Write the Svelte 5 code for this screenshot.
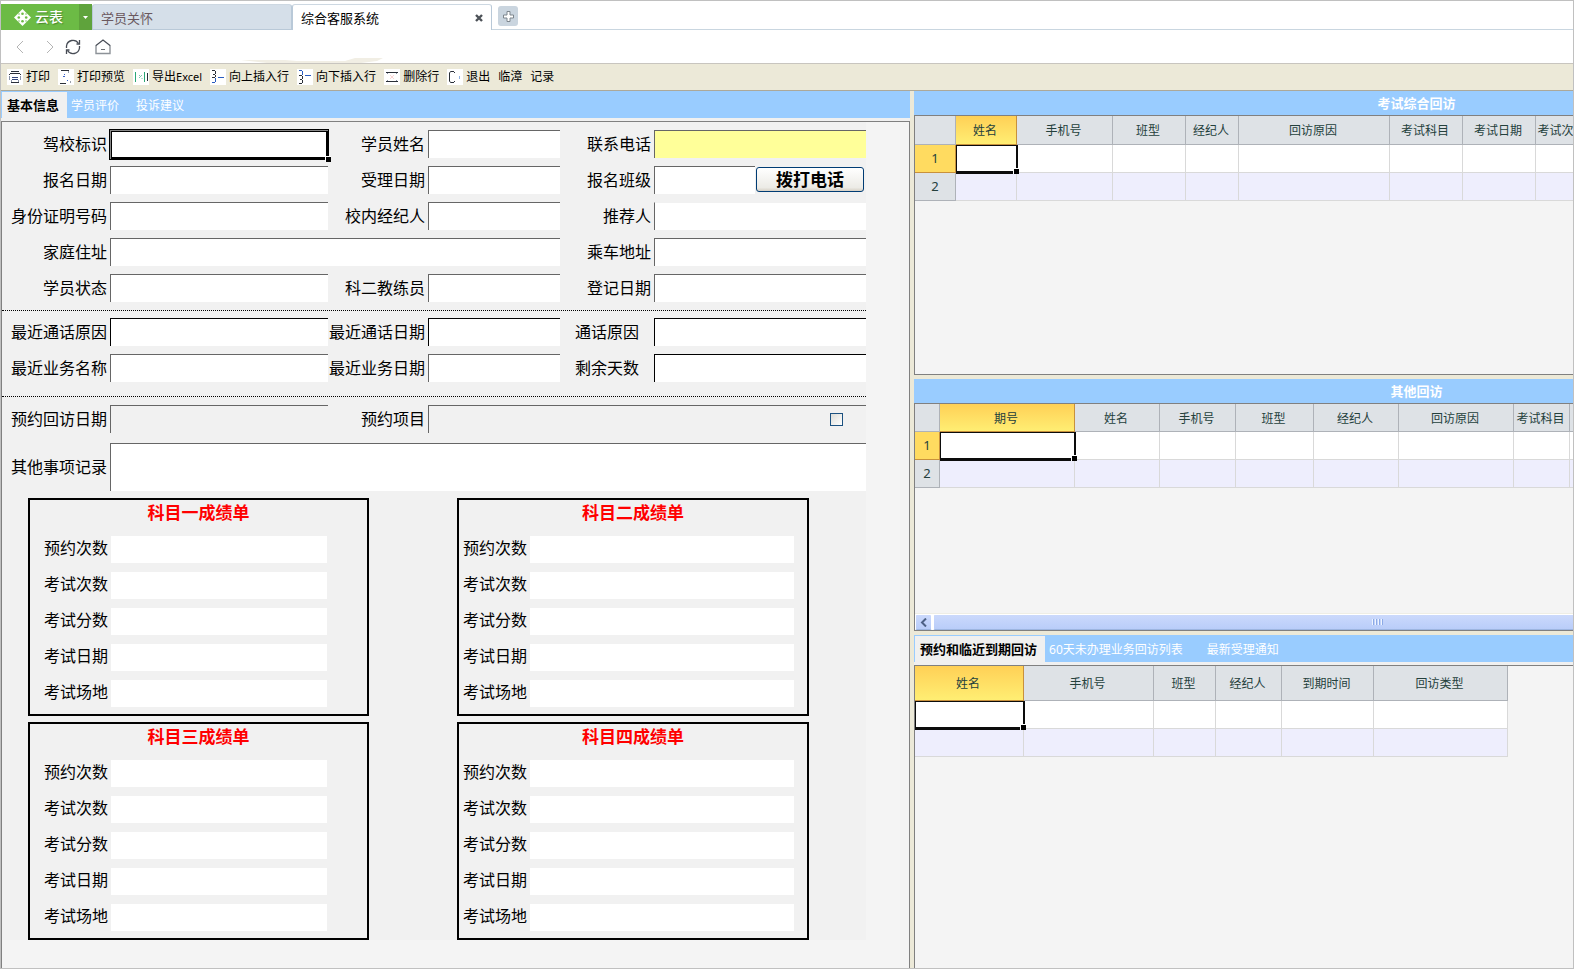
<script>
  let activeTab = "基本信息";
  let activeList = "预约和临近到期回访";

  const infoTabs = ["基本信息", "学员评价", "投诉建议"];
  const listTabs = ["预约和临近到期回访", "60天未办理业务回访列表", "最新受理通知"];

  const tools = [
    { text: "打印", icon: "print" },
    { text: "打印预览", icon: "preview" },
    { text: "导出", latin: "Excel", icon: "excel" },
    { text: "向上插入行", icon: "above" },
    { text: "向下插入行", icon: "below" },
    { text: "删除行", icon: "remove" },
    { text: "退出", icon: "exit" },
    { text: "临漳" },
    { text: "记录" },
  ];

  const student = [
    { label: "驾校标识", selected: true },
    { label: "学员姓名" },
    { label: "联系电话", kind: "phone" },
    { label: "报名日期" },
    { label: "受理日期" },
    { label: "报名班级", call: true },
    { label: "身份证明号码" },
    { label: "校内经纪人" },
    { label: "推荐人", kind: "no-top" },
    { label: "家庭住址", wide: true },
    { label: "乘车地址" },
    { label: "学员状态" },
    { label: "科二教练员" },
    { label: "登记日期" },
  ];

  const recent = [
    { label: "最近通话原因", kind: "dark" },
    { label: "最近通话日期", kind: "dark" },
    { label: "通话原因", kind: "dark", center: true },
    { label: "最近业务名称" },
    { label: "最近业务日期" },
    { label: "剩余天数", kind: "dark", center: true },
  ];

  const scoreCards = ["科目一成绩单", "科目二成绩单", "科目三成绩单", "科目四成绩单"];
  const scoreFields = ["预约次数", "考试次数", "考试分数", "考试日期", "考试场地"];

  const examGrid = {
    numberWidth: 41,
    size: "medium",
    columns: [
      ["姓名", 61],
      ["手机号", 96],
      ["班型", 73],
      ["经纪人", 53],
      ["回访原因", 151],
      ["考试科目", 73],
      ["考试日期", 73],
      ["考试次数", 54],
    ],
  };

  const otherGrid = {
    numberWidth: 25,
    size: "small",
    columns: [
      ["期号", 135],
      ["姓名", 85],
      ["手机号", 76],
      ["班型", 78],
      ["经纪人", 85],
      ["回访原因", 115],
      ["考试科目", 56],
      ["", 80],
    ],
  };

  const dueGrid = {
    numberWidth: 0,
    size: "large",
    columns: [
      ["姓名", 109],
      ["手机号", 130],
      ["班型", 62],
      ["经纪人", 66],
      ["到期时间", 92],
      ["回访类型", 134],
    ],
  };

  const totalWidth = (grid) =>
    grid.columns.reduce((sum, col) => sum + col[1], grid.numberWidth);
</script>

{#snippet sheetTable(grid)}
  <table class="grid {grid.size}" style="width: {totalWidth(grid)}px">
    <colgroup>
      {#if grid.numberWidth}
        <col style="width: {grid.numberWidth}px" />
      {/if}
      {#each grid.columns as col}
        <col style="width: {col[1]}px" />
      {/each}
    </colgroup>
    <thead>
      <tr>
        {#if grid.numberWidth}
          <th></th>
        {/if}
        {#each grid.columns as col, i}
          <th class:current={i === 0}>{col[0]}</th>
        {/each}
      </tr>
    </thead>
    <tbody>
      {#each [1, 2] as row}
        <tr>
          {#if grid.numberWidth}
            <th class="number" class:current={row === 1}>{row}</th>
          {/if}
          {#each grid.columns as col, i}
            <td>
              {#if row === 1 && i === 0}
                <div class="cursor"></div>
              {/if}
            </td>
          {/each}
        </tr>
      {/each}
    </tbody>
  </table>
{/snippet}

{#snippet field(item, id)}
  <label for={id} class:center={item.center}>{item.label}</label>
  <div class="cell" class:wide={item.wide}>
    <input {id} type="text" class={item.kind || ""} />
    {#if item.selected}
      <div class="selection"></div>
    {/if}
    {#if item.call}
      <button class="call" type="button">拨打电话</button>
    {/if}
  </div>
{/snippet}

<div class="app">
  <header class="tabbar">
    <button class="brand">
      <svg width="17" height="17" viewBox="0 0 17 17">
        <path d="M8.500 0l8.500 8.500-8.500 8.500L0 8.500z" fill="#fff" />
        <g fill="#6cbb45">
          <circle cx="8.500" cy="4.800" r="1.300" />
          <circle cx="4.800" cy="8.500" r="1.300" />
          <circle cx="12.200" cy="8.500" r="1.300" />
          <circle cx="8.500" cy="12.200" r="1.300" />
          <circle cx="5" cy="5" r="0.700" />
          <circle cx="12" cy="5" r="0.700" />
          <circle cx="5" cy="12" r="0.700" />
          <circle cx="12" cy="12" r="0.700" />
        </g>
      </svg>
      云表
    </button>
    <button class="brand-menu" aria-label="菜单">
      <svg width="5" height="3" viewBox="0 0 5 3"><path d="M0 0h5L2.500 3z" fill="#fff" /></svg>
    </button>
    <button class="page-tab">学员关怀</button>
    <div class="page-tab open">
      综合客服系统
      <button class="close" aria-label="关闭">
        <svg width="8" height="8" viewBox="0 0 8 8">
          <path d="M1 1l6 6M7 1L1 7" stroke="#4d5258" stroke-width="2.400" />
        </svg>
      </button>
    </div>
    <div class="tab-rest">
      <button class="add" aria-label="新建标签">
        <svg width="11" height="11" viewBox="0 0 11 11">
          <path
            d="M4 .5h3v3.500h3.500v3H7v3.500H4V7H.5V4H4z"
            fill="#fff"
            stroke="#7c858c"
          />
        </svg>
      </button>
    </div>
  </header>

  <nav class="navbar">
    <button aria-label="后退">
      <svg width="16" height="16" viewBox="0 0 16 16">
        <path d="M11 2L5 8l6 6" fill="none" stroke="#b4b4b4" />
      </svg>
    </button>
    <button aria-label="前进">
      <svg width="16" height="16" viewBox="0 0 16 16">
        <path d="M5 2l6 6-6 6" fill="none" stroke="#b4b4b4" />
      </svg>
    </button>
    <button aria-label="刷新">
      <svg width="16" height="16" viewBox="0 0 16 16">
        <g fill="none" stroke="#474c55" stroke-width="1.300">
          <path d="M1.500 9V7A6.500 6.500 0 0 1 13.500 4.500M14.500 7v2A6.500 6.500 0 0 1 2.500 11.500" />
          <path d="M14.500 1v4h-3M1.500 15v-4h3" />
        </g>
      </svg>
    </button>
    <button aria-label="主页">
      <svg width="16" height="16" viewBox="0 0 16 16">
        <path d="M1 6v8.500h14V6" fill="none" stroke="#8d9298" stroke-width="1.400" />
        <path d="M1 6.500L8 1l7 5.500" fill="none" stroke="#474c55" stroke-width="1.200" />
        <path d="M6 10.500h4" stroke="#6c7075" />
      </svg>
    </button>
    <svg class="smudge" width="142" height="5" viewBox="0 0 142 5">
      <path d="M0 2h44l12 1h48l10-3h28l-6 3-16 2H26z" fill="#f1eee4" />
    </svg>
  </nav>

  <div class="toolbar">
    {#each tools as tool}
      <button class="tool">
        {#if tool.icon}
          <svg width="16" height="16" viewBox="0 0 16 16" fill="none" stroke="#2a2f38">
            <rect width="16" height="16" fill="#fff" stroke="none" />
            {#if tool.icon === "print"}
              <path d="M4 2.500h8M3 4.500h10M2.500 5v1M13.500 5v1M4 13.500h8" />
              <path d="M2.500 7v4M13.500 7v4M4.500 11v2M11.500 11v2" stroke="#8a93a8" />
              <path d="M5 8.500h6M5 10.500h6" stroke="#33457a" />
            {:else if tool.icon === "preview"}
              <path d="M3 1.500h8M2 14.500h6" />
              <path d="M10.500 2v2M12.500 12v2" stroke="#9aa0ab" />
              <path d="M6 5.500h1M5 7.500h2M9 11.500h1" stroke="#3a62c8" />
            {:else if tool.icon === "excel"}
              <path d="M2.500 3v10M11.500 3v10" stroke="#2aa876" />
              <path d="M14.500 4v8" />
              <path d="M9 6L6 9M6.500 6v1M9 9v1" stroke="#7cc8ab" />
            {:else if tool.icon === "above"}
              <path d="M2 1.500h3M5.500 2v3M3 5.500h2M5.500 6v2M2 8.500h3" />
              <path d="M8 8.500h6M5.500 9v4M2 13.500h3" stroke="#2a5cc0" />
            {:else if tool.icon === "below"}
              <path d="M8 6.500h6M2 1.500h3M5.500 2v4" stroke="#2a5cc0" />
              <path d="M2 6.500h3M5.500 7v3M3 10.500h2M5.500 11v3M2 14.500h3" />
            {:else if tool.icon === "remove"}
              <path d="M2 3.500h12M2 12.500h12" />
              <path d="M3.500 4v1M12.500 4v1M3.500 11v1M12.500 11v1" stroke="#8a93a8" />
              <path d="M6 6l4 4M10 6l-4 4" stroke="#fbd5d5" />
            {:else}
              <path d="M7 2.500H3.500L2.500 4v8l1 1.500H7M7.500 3v1M7.500 12v1" />
              <path d="M12.500 7v3" stroke="#8fb0e0" />
            {/if}
          </svg>
        {/if}
        <span>{tool.text}{#if tool.latin}<small>{tool.latin}</small>{/if}</span>
      </button>
    {/each}
  </div>

  <main class="workspace">
    <section class="left">
      <div class="tabs">
        {#each infoTabs as tab}
          <button class:active={tab === activeTab} on:click={() => (activeTab = tab)}>{tab}</button>
        {/each}
      </div>
      <div class="form-panel">
        <form class="sheet">
          <div class="rows student">
            {#each student as item, i}
              {@render field(item, `student-${i}`)}
            {/each}
          </div>
          <div class="rows recent">
            {#each recent as item, i}
              {@render field(item, `recent-${i}`)}
            {/each}
          </div>
          <div class="rows booking">
            <label for="visit-date">预约回访日期</label>
            <div class="cell"><input id="visit-date" type="text" class="plain" /></div>
            <label for="visit-item">预约项目</label>
            <div class="cell span">
              <input id="visit-item" type="text" class="plain" />
              <input type="checkbox" aria-label="预约项目" />
            </div>
            <label for="notes">其他事项记录</label>
            <textarea id="notes"></textarea>
          </div>
          <div class="scores">
            {#each scoreCards as card, i}
              <fieldset class="score" class:second={i % 2 === 1}>
                <h3>{card}</h3>
                {#each scoreFields as name, n}
                  <div class="score-row">
                    <label for="score-{i}-{n}">{name}</label>
                    <input id="score-{i}-{n}" type="text" />
                  </div>
                {/each}
              </fieldset>
            {/each}
          </div>
        </form>
      </div>
    </section>

    <section class="right">
      <div class="pane">
        <h2>考试综合回访</h2>
        <div class="pane-body">{@render sheetTable(examGrid)}</div>
      </div>
      <div class="pane">
        <h2>其他回访</h2>
        <div class="pane-body">
          {@render sheetTable(otherGrid)}
          <div class="scrollbar">
            <button class="scroll-left" aria-label="向左滚动">
              <svg width="7" height="9" viewBox="0 0 7 9">
                <path d="M6 .5l-4 4 4 4" fill="none" stroke="#4d6185" stroke-width="2" />
              </svg>
            </button>
            <div class="thumb"><i></i><i></i><i></i><i></i></div>
          </div>
        </div>
      </div>
      <div class="pane">
        <div class="tabs lists">
          {#each listTabs as tab}
            <button class:active={tab === activeList} on:click={() => (activeList = tab)}>{tab}</button>
          {/each}
        </div>
        <div class="pane-body last">{@render sheetTable(dueGrid)}</div>
      </div>
    </section>
  </main>
</div>

<style>
  :global(body) {
    background: #f4f4f4;
  }

  .app {
    display: flex;
    flex-direction: column;
    box-sizing: border-box;
    min-height: 100vh;
    border: 1px solid #c0c0c0;
    overflow: hidden;
    font-family: "Noto Sans", "Noto Sans CJK SC", sans-serif;
    font-size: 12px;
    color: #000;
  }

  button,
  input,
  textarea {
    box-sizing: border-box;
    margin: 0;
    padding: 0;
    border: none;
    border-radius: 0;
    background: none;
    font: inherit;
    color: inherit;
    outline: none;
  }

  svg {
    display: block;
    flex: none;
  }

  /* browser tabs */
  .tabbar {
    display: flex;
    height: 26px;
    padding-top: 3px;
    background: #fff;
    font-size: 13px;
    white-space: nowrap;
  }

  .brand {
    display: flex;
    align-items: center;
    gap: 4px;
    width: 78px;
    padding-left: 13px;
    background: #6cbb45;
    color: #fff;
    font-size: 14px;
    font-weight: 500;
    line-height: 18px;
    text-shadow: 1px 1px 1px #4a8a2c;
  }

  .brand-menu {
    display: flex;
    align-items: center;
    justify-content: center;
    width: 13px;
    background: #5fa33c;
  }

  .page-tab {
    display: flex;
    align-items: center;
    justify-content: space-between;
    box-sizing: border-box;
    width: 200px;
    padding: 0 8px;
    border: 1px solid #b9c9d8;
    border-top-color: #cdd8e2;
    border-radius: 3px 3px 0 0;
    background: #d5dfe9;
    color: #6b585e;
  }

  .page-tab.open {
    border-bottom: none;
    background: #fff;
    color: #000;
  }

  .close {
    padding: 0;
  }

  .tab-rest {
    flex: 1;
    padding: 2px 6px;
    border-bottom: 1px solid #c9d6e0;
  }

  .add {
    display: flex;
    align-items: center;
    justify-content: center;
    width: 20px;
    height: 20px;
    border-radius: 3px;
    background: #cad5df;
  }

  .navbar {
    display: flex;
    align-items: center;
    height: 33px;
    padding-left: 11px;
    border-bottom: 1px solid #c8c5bf;
    background: #fff;
  }

  .navbar button + button {
    margin-left: 14px;
  }

  .navbar button:nth-of-type(3) {
    margin-left: 7px;
  }

  .navbar .smudge {
    align-self: flex-end;
    margin-left: 130px;
  }

  .toolbar {
    display: flex;
    align-items: center;
    gap: 8px;
    height: 26px;
    padding-left: 6px;
    border-bottom: 1px solid #aca899;
    background: #ece9d8;
    white-space: nowrap;
  }

  .tool {
    display: flex;
    align-items: center;
    gap: 3px;
    line-height: 16px;
  }

  small {
    font-size: 11px;
  }

  /* split view */
  .workspace {
    display: grid;
    grid-template-columns: minmax(0, 909fr) minmax(0, 659fr);
    column-gap: 4px;
    flex: 1;
    background: #ece9d8;
  }

  .left {
    display: flex;
    flex-direction: column;
    background: #f0f0f0;
    overflow: hidden;
  }

  .tabs {
    display: flex;
    height: 26px;
    padding: 1px 0 0 1px;
    background: #99ccff;
    white-space: nowrap;
  }

  .tabs button {
    padding: 0 4px;
    color: #fff;
  }

  .tabs button:nth-child(3) {
    margin-left: 9px;
  }

  .tabs.lists button:nth-child(3) {
    margin-left: 16px;
  }

  .tabs .active {
    padding: 0 8px 2px 5px;
    background: #f0f0f0;
    color: #000;
    font-size: 13px;
    font-weight: bold;
  }

  .form-panel {
    flex: 1;
    margin-top: 3px;
    border: 1px solid #808080;
    border-bottom: none;
    background: #f4f4f4;
    overflow: hidden;
  }

  .sheet {
    width: 864px;
    background: #f1f1f1;
    font-size: 16px;
    line-height: 24px;
  }

  .rows {
    display: grid;
    grid-template-columns: 108px 218px 100px 132px 94px 212px;
    row-gap: 8px;
    align-items: center;
  }

  .student {
    padding: 8px 0;
    border-bottom: 1px dotted #000;
  }

  .recent {
    padding: 7px 0 14px;
    border-bottom: 1px dotted #000;
  }

  .booking {
    row-gap: 10px;
    padding: 8px 0 7px;
  }

  label {
    padding-right: 3px;
    text-align: right;
    white-space: nowrap;
  }

  label.center {
    padding: 0;
    text-align: center;
  }

  .cell {
    position: relative;
    display: flex;
    height: 28px;
  }

  .cell.wide {
    grid-column: span 3;
  }

  .cell.span {
    grid-column: span 3;
    align-items: center;
    border: solid #666;
    border-width: 1px 0 0 1px;
    box-sizing: border-box;
  }

  input[type="text"] {
    flex: 1;
    min-width: 0;
    padding: 0 4px;
    border: solid #666;
    border-width: 1px 0 0 1px;
    background: #fff;
  }

  input[type="text"].phone {
    background: #ffff99;
  }

  input[type="text"].dark {
    border-color: #000;
  }

  input[type="text"].no-top {
    border-top-color: #f1f1f1;
  }

  input[type="text"].plain {
    background: none;
  }

  .span input[type="text"].plain {
    border: none;
  }

  input[type="checkbox"] {
    appearance: none;
    width: 13px;
    height: 13px;
    margin-right: 23px;
    border: 1px solid #1c5180;
    background: linear-gradient(135deg, #dcdcd7, #fff);
  }

  .selection {
    position: absolute;
    inset: -1px -1px -2px -1px;
    border: 1px solid #000;
    box-shadow:
      inset 1px 1px 0 #888,
      inset 0 0 0 2px #000;
    pointer-events: none;
  }

  .selection::after,
  .cursor::after {
    content: "";
    position: absolute;
    right: -3px;
    bottom: -3px;
    width: 5px;
    height: 5px;
    border: solid #fff;
    border-width: 1px 0 0 1px;
    background: #000;
  }

  .call {
    width: 108px;
    height: 25px;
    margin: 1px 2px 0 1px;
    border: 1px solid #003c74;
    border-radius: 3px;
    background: linear-gradient(#fff, #ecebe6 85%, #d6d0c5);
    font-size: 17px;
    font-weight: bold;
    line-height: 22px;
  }

  textarea {
    grid-column: span 5;
    height: 48px;
    border: solid #666;
    border-width: 1px 0 0 1px;
    background: #fff;
    resize: none;
  }

  .scores {
    display: grid;
    grid-template-columns: 341px 352px;
    gap: 6px 88px;
    padding-left: 26px;
  }

  .score {
    display: flex;
    flex-direction: column;
    gap: 9px;
    min-width: 0;
    margin: 0;
    padding: 0 0 7px;
    border: 2px solid #000;
  }

  h3 {
    margin: 0 0 1px;
    color: #f00;
    font-size: 17px;
    line-height: 26px;
    text-align: center;
  }

  .score-row {
    display: grid;
    grid-template-columns: 81px 216px;
    align-items: start;
    height: 27px;
  }

  .second .score-row {
    grid-template-columns: 71px 264px;
  }

  .score-row input[type="text"] {
    height: 27px;
    border: none;
  }

  /* right hand panes */
  .right {
    display: grid;
    grid-template-rows: 284fr 252fr 333fr;
    grid-template-columns: 1005px;
    row-gap: 4px;
    overflow: hidden;
  }

  .pane {
    display: flex;
    flex-direction: column;
    background: #f0f0f0;
  }

  h2 {
    margin: 0;
    background: #99ccff;
    color: #fff;
    font-size: 13px;
    line-height: 24px;
    text-align: center;
  }

  .pane-body {
    display: flex;
    flex-direction: column;
    justify-content: space-between;
    flex: 1;
    border: 1px solid #808080;
    background: #f4f4f4;
  }

  .pane-body.last {
    margin-top: 3px;
    border-bottom: none;
  }

  .grid {
    border-spacing: 0;
    table-layout: fixed;
    line-height: 18px;
    white-space: nowrap;
  }

  th,
  td {
    box-sizing: border-box;
    height: 28px;
    padding: 0;
    border: solid #d9d9d9;
    border-width: 0 1px 1px 0;
    background: #fff;
  }

  th {
    border-color: #aeb2b8;
    background: #dee2e6;
    color: #24403c;
    font-weight: normal;
    text-align: center;
  }

  thead th {
    padding: 2px 2px 0 0;
  }

  .medium thead th {
    height: 29px;
  }

  .large thead th {
    height: 35px;
  }

  th.current {
    border-color: #c8913c;
    background: linear-gradient(#ffd056, #ffee73);
  }

  th.number {
    padding-bottom: 2px;
    font-size: 13px;
  }

  th.number.current {
    background: #ffdb60;
  }

  td {
    position: relative;
  }

  tr:nth-child(2) td {
    background: #eeeefd;
  }

  .cursor {
    position: absolute;
    inset: 0 -2px -2px 0;
    z-index: 1;
    border: solid #0c0c0c;
    border-width: 1px 2px 3px 1px;
  }

  .scrollbar {
    display: flex;
    gap: 1px;
    height: 17px;
    box-sizing: border-box;
    border-top: 1px solid #eeede5;
    background: #fff;
  }

  .scroll-left,
  .thumb {
    display: flex;
    align-items: center;
    justify-content: center;
    box-sizing: border-box;
    border: 1px solid #fff;
    border-bottom-color: #9db5e0;
    border-radius: 2px;
    background: linear-gradient(#cbd9fc, #b9cdf9);
  }

  .scroll-left {
    width: 17px;
  }

  .thumb {
    gap: 1px;
    width: 888px;
  }

  .thumb i {
    width: 1px;
    height: 6px;
    border-right: 1px solid #8caae6;
    background: #eef4fe;
  }
</style>
